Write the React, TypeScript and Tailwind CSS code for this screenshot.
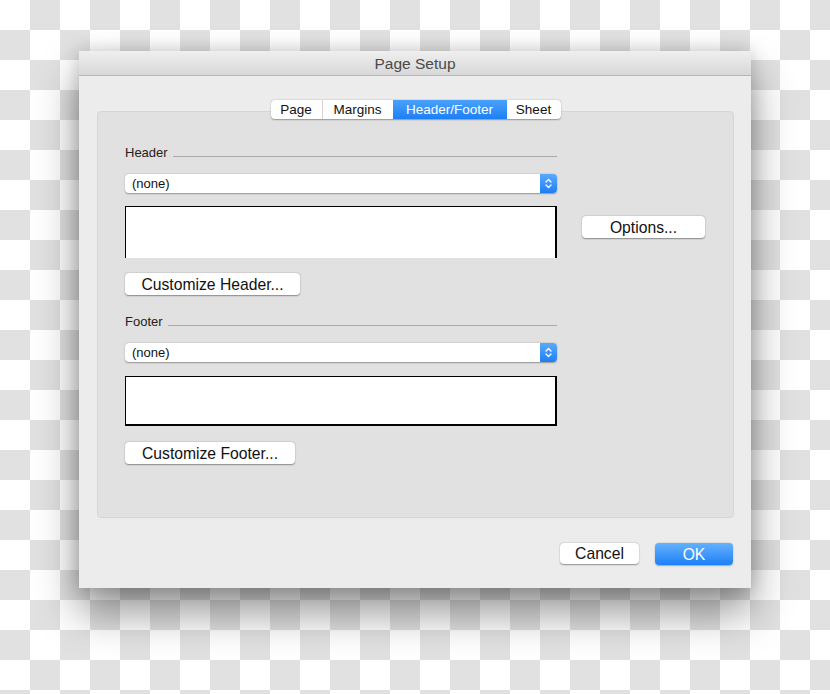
const font = { fontFamily: '"Liberation Sans", Arial, sans-serif' };

const Stepper = () => (
  <div className="w-[17px] h-full rounded-r-[4px] bg-gradient-to-b from-[#5aaafb] to-[#1b7ef6] flex items-center justify-center">
    <svg width="7" height="11" viewBox="0 0 7 11" fill="none" stroke="white" strokeWidth="1.3" strokeLinecap="round" strokeLinejoin="round">
      <path d="M1 4 L3.5 1.5 L6 4" />
      <path d="M1 7 L3.5 9.5 L6 7" />
    </svg>
  </div>
);

const SectionLabel = ({ label }: { label: string }) => (
  <div className="flex items-end h-[15px]">
    <span className="text-[13px] leading-[14px] text-[#222]">{label}</span>
    <div className="flex-1 h-px bg-[#a9a9a9] ml-[5px] mb-[3px]" />
  </div>
);

const Select = () => (
  <div className="h-[19px] bg-white rounded-[4px] shadow-[0_0.5px_1.5px_rgba(0,0,0,0.35)] flex items-center justify-between">
    <span className="pl-[7px] text-[13px] leading-none text-[#111]">(none)</span>
    <Stepper />
  </div>
);

const MacButton = ({ label, className }: { label: string; className: string }) => (
  <div
    className={`h-[22px] bg-white rounded-[4px] shadow-[0_0.5px_1.5px_rgba(0,0,0,0.4)] flex items-center justify-center pt-px text-[15.7px] leading-none text-[#111] ${className}`}
  >
    {label}
  </div>
);

const tabs = ["Page", "Margins", "Header/Footer", "Sheet"];
const tabWidths = ["w-[51px]", "w-[71px]", "w-[114px]", "w-[54px]"];

export default function App() {
  return (
    <div
      style={font}
      className="w-[830px] h-[694px] overflow-hidden pt-[51px] pl-[79px] bg-[conic-gradient(#e1e1e1_25%,#fff_0_50%,#e1e1e1_0_75%,#fff_0)] bg-[length:60px_60px]"
    >
      <div className="w-[672px] h-[537px] bg-[#ececec] flex flex-col shadow-[0_24px_40px_rgba(0,0,0,0.42),0_0_16px_rgba(0,0,0,0.18)]">
        <div className="h-[25px] shrink-0 bg-gradient-to-b from-[#efefef] to-[#d8d8d8] border-b border-[#b5b5b5] flex items-center justify-center pt-[2px] text-[15.5px] text-[#4a4a4a]">
          Page Setup
        </div>

        <div className="pl-[18px] pr-[17px] pt-[24px]">
          <div className="relative z-10 flex justify-center -mb-[8px]">
            <div className="flex h-[19px] bg-white rounded-[4px] shadow-[0_0.5px_1.5px_rgba(0,0,0,0.35)] overflow-hidden">
              {tabs.map((t, i) => (
                <div
                  key={t}
                  className={`${tabWidths[i]} flex items-center justify-center text-[13.5px] leading-none ${
                    t === "Header/Footer"
                      ? "bg-gradient-to-b from-[#4aa1fa] to-[#1b7ff6] text-white"
                      : "text-[#111]"
                  } ${i === 1 ? "border-l border-[#d4d4d4]" : ""}`}
                >
                  {t}
                </div>
              ))}
            </div>
          </div>

          <div className="h-[407px] bg-[#e1e1e1] border border-[#d5d5d5] rounded-[4px] pl-[27px] pt-[33px] flex">
            <div className="w-[432px] flex flex-col">
              <SectionLabel label="Header" />
              <div className="mt-[14px]">
                <Select />
              </div>
              <div className="mt-[13px] h-[52px] bg-white border-t border-l border-black border-r-2" />
              <MacButton label="Customize Header..." className="mt-[15px] w-[175px]" />

              <div className="mt-[19px]">
                <SectionLabel label="Footer" />
              </div>
              <div className="mt-[14px]">
                <Select />
              </div>
              <div className="mt-[14px] h-[50px] bg-white border-t border-l border-black border-r-2 border-b-2" />
              <MacButton label="Customize Footer..." className="mt-[16px] w-[170px]" />
            </div>

            <div className="ml-[25px]">
              <MacButton label="Options..." className="mt-[71px] w-[123px]" />
            </div>
          </div>

          <div className="mt-[25px] flex justify-end gap-[16px] mr-[1px]">
            <MacButton label="Cancel" className="w-[79px] !h-[21px]" />
            <div className="w-[78px] h-[22px] rounded-[4px] bg-gradient-to-b from-[#62b1fc] to-[#1a80f7] shadow-[0_0.5px_1.5px_rgba(0,0,0,0.3)] flex items-center justify-center pt-px text-[15.7px] leading-none text-white">
              OK
            </div>
          </div>
        </div>
      </div>
    </div>
  );
}
